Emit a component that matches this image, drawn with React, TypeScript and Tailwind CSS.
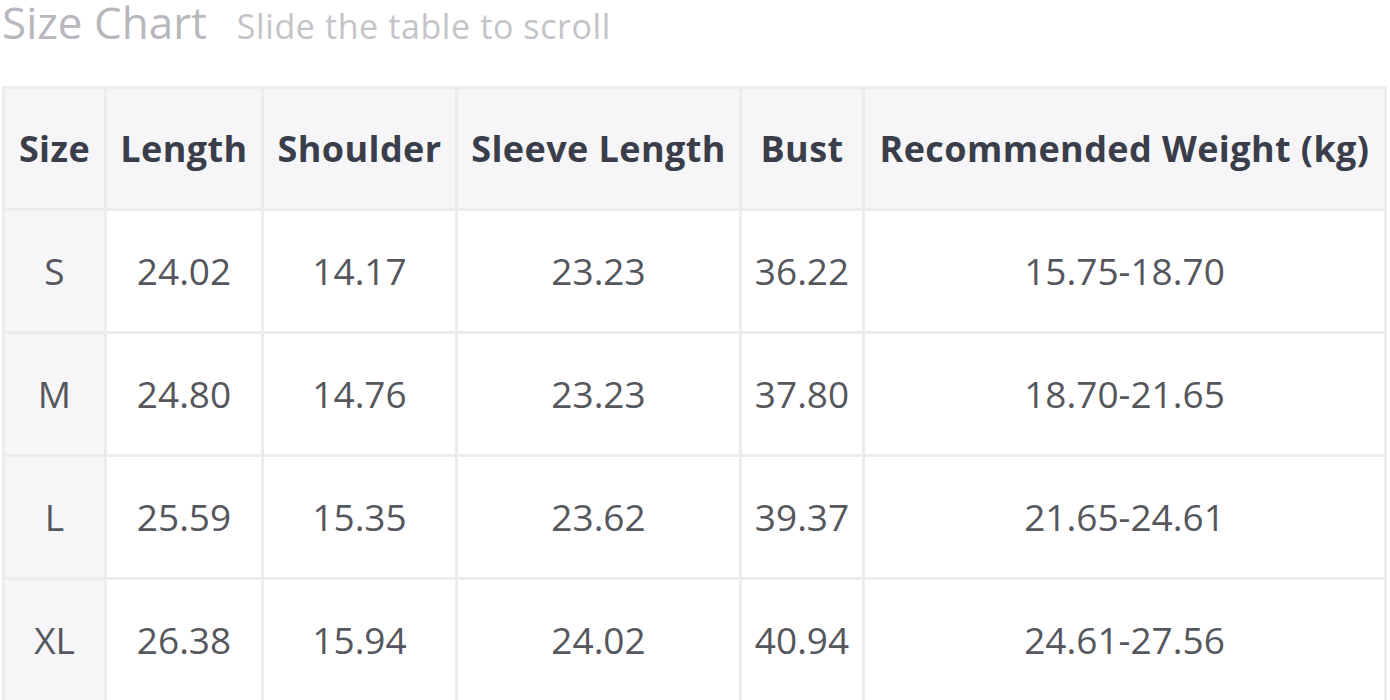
const headers = ["Size", "Length", "Shoulder", "Sleeve Length", "Bust", "Recommended Weight (kg)"]

const rows = [
  ["S", "24.02", "14.17", "23.23", "36.22", "15.75-18.70"],
  ["M", "24.80", "14.76", "23.23", "37.80", "18.70-21.65"],
  ["L", "25.59", "15.35", "23.62", "39.37", "21.65-24.61"],
  ["XL", "26.38", "15.94", "24.02", "40.94", "24.61-27.56"],
]

const widths = ["w-[102px]", "w-[157px]", "w-[194px]", "w-[284px]", "w-[123px]", "w-[522px]"]

export default function App() {
  return (
    <div className="w-[1390px] h-[700px] overflow-hidden bg-white font-['Open_Sans',sans-serif]">
      <div className="flex h-[44px] items-baseline gap-[30px] pl-[2px]">
        <h2 className="text-[44px] leading-[44px] text-[#b8b8bc]">Size Chart</h2>
        <span className="text-[34px] leading-[44px] text-[#c4c4c8] tracking-[0.6px]">Slide the table to scroll</span>
      </div>
      <table className="mt-[42px] ml-[2px] table-fixed border-collapse">
        <colgroup>
          {widths.map((w, i) => (
            <col key={i} className={w} />
          ))}
        </colgroup>
        <thead>
          <tr className="h-[122px] bg-[#f6f6f8]">
            {headers.map((h) => (
              <th
                key={h}
                className="border-[3px] border-[#ececee] text-center text-[36px] font-bold text-[#3a3e4a] tracking-[0.4px] whitespace-nowrap px-0"
              >
                {h}
              </th>
            ))}
          </tr>
        </thead>
        <tbody>
          {rows.map((r) => (
            <tr key={r[0]} className="h-[123px]">
              {r.map((c, i) => (
                <td
                  key={i}
                  className={
                    "border-[3px] border-[#ececee] text-center text-[37px] text-[#55575c] " +
                    (i === 0 ? "bg-[#f6f6f8]" : "bg-white")
                  }
                >
                  {c}
                </td>
              ))}
            </tr>
          ))}
        </tbody>
      </table>
    </div>
  )
}
